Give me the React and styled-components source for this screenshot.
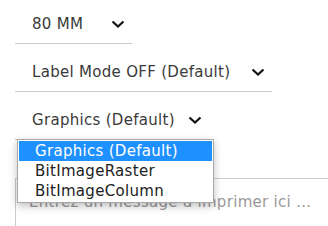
import React from 'react';
import styled, { createGlobalStyle } from 'styled-components';

const GlobalStyle = createGlobalStyle`
  html, body {
    margin: 0;
    padding: 0;
    background: #fff;
    overflow: hidden;
  }
  body {
    font-family: "DejaVu Sans", "Liberation Sans", sans-serif;
    color: #333;
  }
`;

const Page = styled.div`
  padding: 4px 0 0 15px;
  display: flex;
  flex-direction: column;
  align-items: flex-start;
`;

const SelectWrap = styled.div`
  position: relative;
  margin-bottom: 8px;
`;

const SelectBox = styled.div`
  box-sizing: border-box;
  height: 40px;
  display: flex;
  align-items: center;
  width: ${p => p.$width}px;
  padding: 0 7px 0 17px;
  border-bottom: 1px solid #ccc;
  font-size: 15px;
  letter-spacing: 0.3px;
  color: #3a3a3a;
`;

const Value = styled.span`
  flex: 1;
  white-space: nowrap;
`;

const Chevron = styled.svg`
  width: 14px;
  height: 8px;
  flex-shrink: 0;
`;

const Menu = styled.ul`
  position: absolute;
  z-index: 2;
  left: 2px;
  top: 39px;
  width: 193px;
  margin: 0;
  padding: 1px;
  list-style: none;
  background: #fff;
  border: 1px solid #a9a9a9;
  box-shadow: 0 3px 8px rgba(0, 0, 0, 0.25);
  font-size: 15px;
  letter-spacing: 0.3px;
`;

const Option = styled.li`
  height: 20px;
  line-height: 20px;
  padding-left: 16px;
  white-space: nowrap;
  color: ${p => (p.$active ? '#fff' : '#222')};
  background: ${p => (p.$active ? '#1e90ff' : 'transparent')};
`;

const Message = styled.div`
  box-sizing: border-box;
  margin-top: 30px;
  width: 313px;
  height: 48px;
  border: 1px solid #ccc;
  border-right: none;
  border-bottom: none;
  padding: 14px 13px 0;
  font-size: 15px;
  letter-spacing: 0.3px;
  color: #999;
  white-space: nowrap;
  overflow: hidden;
`;

const Arrow = () => (
  <Chevron viewBox="0 0 14 8">
    <polyline points="1.5,1.5 7,6.5 12.5,1.5" fill="none" stroke="#111" strokeWidth="2.2" />
  </Chevron>
);

const Select = ({ value, width, options, active }) => (
  <SelectWrap>
    <SelectBox $width={width}>
      <Value>{value}</Value>
      <Arrow />
    </SelectBox>
    {options && (
      <Menu>
        {options.map(o => (
          <Option key={o} $active={o === active}>{o}</Option>
        ))}
      </Menu>
    )}
  </SelectWrap>
);

export default function App() {
  return (
    <>
      <GlobalStyle />
      <Page>
        <Select value="80 MM" width={117} />
        <Select value="Label Mode OFF (Default)" width={257} />
        <Select
          value="Graphics (Default)"
          width={194}
          options={['Graphics (Default)', 'BitImageRaster', 'BitImageColumn']}
          active="Graphics (Default)"
        />
        <Message>Entrez un message à imprimer ici ...</Message>
      </Page>
    </>
  );
}
